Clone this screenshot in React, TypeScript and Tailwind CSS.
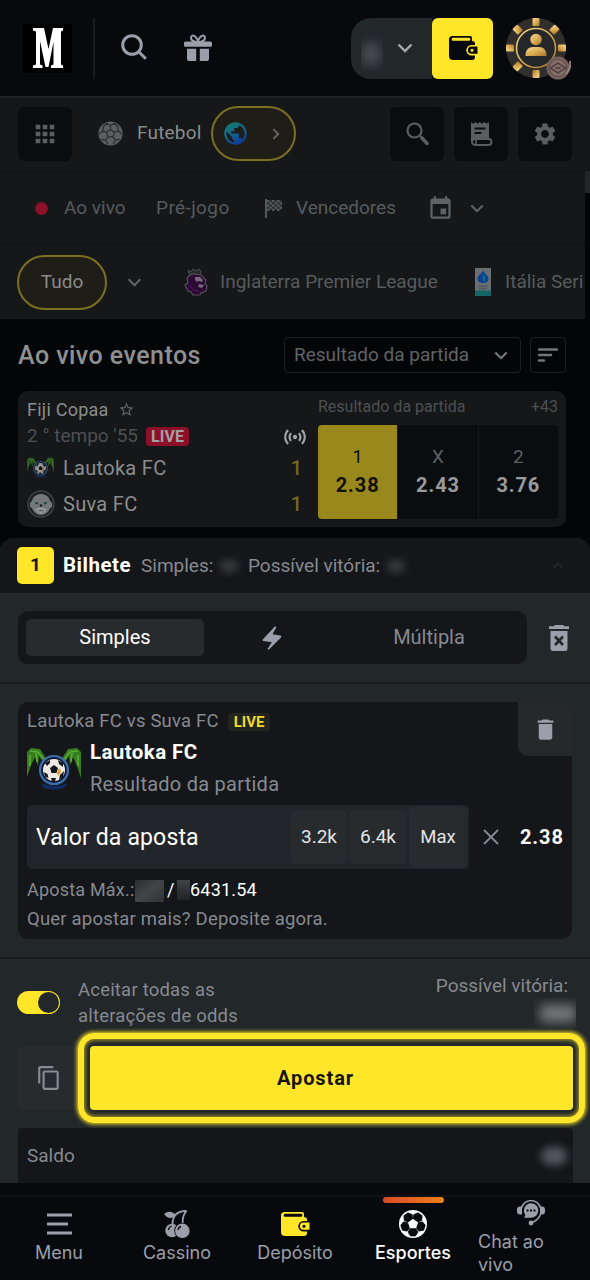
import type { ReactNode } from 'react'
import { MdApps, MdContentCopy, MdDelete, MdEvent, MdPublic, MdSensors, MdSettings, MdStarBorder } from 'react-icons/md'

type IconProps = { className?: string }

function Chevron({ className = '' }: IconProps) {
  return (
    <svg viewBox="0 0 16 10" fill="none" stroke="currentColor" strokeWidth="2.4" className={className}>
      <path d="M1.5 1.5 8 8l6.5-6.5" />
    </svg>
  )
}

function WalletIcon({ className = '', clasp }: IconProps & { clasp: string }) {
  return (
    <svg viewBox="0 0 30 26" className={className}>
      <path d="M4.5 1H22a2 2 0 0 1 2 2v3a3 3 0 0 1 3 3v13a3 3 0 0 1-3 3H5a4 4 0 0 1-4-4V4.5A3.5 3.5 0 0 1 4.5 1Z" fill="currentColor" />
      <rect x="3.8" y="2.8" width="18.5" height="3" rx="1.2" fill={clasp} />
      <path d="M30 10h-6.5a5.2 5.2 0 0 0 0 10.4H30Z" fill={clasp} />
      <path d="M29.5 11.6h-6a3.6 3.6 0 0 0 0 7.2h6Z" fill="currentColor" />
      <circle cx="24" cy="15.2" r="1.5" fill={clasp} />
    </svg>
  )
}

function GiftIcon() {
  return (
    <svg viewBox="0 0 28 28" className="size-7 text-[#9a9faa]" fill="currentColor">
      <path d="M14 8C9 8 6.8 5.8 7 3.5 7.3.8 11.5.2 14 7 16.5.2 20.7.8 21 3.5 21.2 5.8 19 8 14 8Z" fill="none" stroke="currentColor" strokeWidth="2" />
      <path d="M1.5 7.5h25A1.5 1.5 0 0 1 28 9v2.5a1.2 1.2 0 0 1-1.2 1.2H1.2A1.2 1.2 0 0 1 0 11.5V9a1.5 1.5 0 0 1 1.500-1.500Z" />
      <path d="M3 14.800h9.200V27H5a2 2 0 0 1-2-2ZM15.800 14.800H25V25a2 2 0 0 1-2 2h-7.200Z" />
    </svg>
  )
}

function ChipAvatar() {
  const marks = [0, 45, 90, 135, 180, 225, 270, 315]
  return (
    <svg viewBox="0 0 66 66" className="size-[66px] shrink-0">
      <defs>
        <linearGradient id="gold" x1="0" y1="0" x2="1" y2="1">
          <stop offset="0" stopColor="#f7d98c" />
          <stop offset="0.5" stopColor="#dcae58" />
          <stop offset="1" stopColor="#a97424" />
        </linearGradient>
      </defs>
      <circle cx="31" cy="31" r="30" fill="#302f2d" />
      {marks.map((deg) => (
        <rect key={deg} x="27.5" y="1" width="7" height="8" rx="1" fill="url(#gold)" transform={`rotate(${deg} 31 31)`} />
      ))}
      <circle cx="31" cy="31" r="19.5" fill="#25262a" stroke="url(#gold)" strokeWidth="1.6" />
      <circle cx="31" cy="22.5" r="5.8" fill="url(#gold)" />
      <path d="M20.5 39c0-6 3-9 7.5-9h6c4.5 0 7.5 3 7.5 9Z" fill="url(#gold)" />
      <circle cx="53" cy="51" r="11.5" fill="#76605c" />
      <circle cx="53" cy="51" r="8.5" fill="#86706b" stroke="#5f4b49" strokeWidth="1" />
      <path d="m45.5 51 7.5-5 7.5 5-7.5 5ZM50.5 51h5" fill="none" stroke="#574442" strokeWidth="1.8" />
      <path d="M65 44c1 5-1 10-4 13" stroke="#9b827c" strokeWidth="2" fill="none" />
    </svg>
  )
}

function Ball({ className = '', dark, light }: IconProps & { dark: string; light: string }) {
  return (
    <svg viewBox="0 0 28 28" className={className}>
      <circle cx="14" cy="14" r="13.5" fill={light} />
      <path
        d="m14 9.5 4.4 3.2-1.7 5.1h-5.4l-1.7-5.1ZM14 9.5V5m4.4 7.7 4.2-1.5m-5.9 6.6 2.7 3.7m-8.1-3.7-2.7 3.7m1-8.8-4.2-1.5M14 5 9.5 2.5M14 5l4.5-2.5M22.6 11.2l-.5-5m.5 5 4 3.5M19.4 21.5l5-1m-5 1L17 26M8.6 21.5l-5-1m5 1L11 26M5.4 11.2l.5-5m-.5 5-4 3.5M9.5 2.5 5.9 6.2M18.5 2.5l3.6 3.7"
        stroke={dark}
        strokeWidth="1.4"
        fill="none"
      />
    </svg>
  )
}

function NavBall() {
  return (
    <svg viewBox="0 0 28 28" className="size-7">
      <circle cx="14" cy="14" r="14" fill="#fff" />
      {[0, 72, 144, 216, 288].map((deg) => (
        <path key={deg} d="M11.2 18.8h5.6l2 3.3-2.3 3.8h-5l-2.3-3.8Z" fill="#08090d" stroke="#08090d" strokeLinejoin="round" transform={`rotate(${deg} 14 14)`} />
      ))}
    </svg>
  )
}

function Globe() {
  return (
    <>
      <svg className="size-0">
        <linearGradient id="sea" x1="0" y1="0" x2="0.5" y2="1">
          <stop offset="0" stopColor="#167d5d" />
          <stop offset="0.5" stopColor="#13698c" />
          <stop offset="1" stopColor="#103e9c" />
        </linearGradient>
      </svg>
      <MdPublic className="-m-[2px] size-[27px]" fill="url(#sea)" />
    </>
  )
}

function ReceiptIcon() {
  return (
    <svg viewBox="0 0 23 24" className="h-6 w-[23px]">
      <path d="m1 0 2.200 1.800L5.400 0l2.200 1.800L9.800 0 12 1.800 14.200 0l2.200 1.800L19 0v17H6.500A4 4 0 0 0 3 22.500L1 20Z" fill="#5a5e60" />
      <path d="M4.500 6.500h11M4.500 11h7" stroke="#090d0f" strokeWidth="2" />
      <rect x="2" y="17" width="19.5" height="6" rx="3" fill="#090d0f" stroke="#5a5e60" strokeWidth="1.8" />
      <path d="M6 17v6" stroke="#5a5e60" strokeWidth="1.6" />
    </svg>
  )
}

function CheckeredFlag() {
  const cells = [0, 1, 2, 3, 4, 5].flatMap((x) => [0, 1, 2, 3, 4].map((y) => [x, y])).filter(([x, y]) => (x + y) % 2 === 0)
  return (
    <svg viewBox="0 0 18 19" className="h-[19px] w-[18px]" fill="#54585a">
      <path d="M0 0h2v19H0Z" />
      <path d="M2 1h15v10H2Z" opacity="0.35" />
      {cells.map(([x, y]) => (
        <rect key={`${x}-${y}`} x={2 + x * 2.5} y={1 + y * 2.2} width="2.5" height="2.2" />
      ))}
    </svg>
  )
}

function PremierLogo() {
  return (
    <svg viewBox="0 0 24 28" className="h-7 w-6">
      <path d="m5 8 3-2h8l3 3 3 3-1 4 2 2-1 5-5 2-1 2h-7l-2-3-3-1-3-6 3-2-1-5Z" fill="#2c0835" stroke="#57515b" strokeWidth="1.2" />
      <path d="m5 6-1-4 3 2 2-3 3 2 3-2 2 2-1 4-5-1Z" fill="#2a2a2e" stroke="#4f4c54" strokeWidth="1" />
      <path d="M11 9h5l3 3-1 2-3-1-2 1-2-2ZM15 16l5 1-2 3-4-1Z" fill="#746a79" />
      <path d="m6 18 4 4 5 1" stroke="#431950" strokeWidth="1.5" fill="none" />
    </svg>
  )
}

function SerieALogo() {
  return (
    <svg viewBox="0 0 16 28" className="h-7 w-4">
      <path d="M0 0h16v28H0Z" fill="#696e72" />
      <path d="M8 2.5c1 3 5.5 5 5.5 8.500 0 3-2.500 4-5.500 4s-5.500-1-5.500-4C2.500 7.500 7 5.500 8 2.500Z" fill="#0b448d" />
      <path d="M8 5c1 3 3 4 2.500 7L8 14Z" fill="#12689e" />
      <path d="M3 18h10M4 20.500h8" stroke="#505866" strokeWidth="1.4" />
      <path d="M0 22.500h16V28H0Z" fill="#156466" />
    </svg>
  )
}

function LautokaLogo({ className = '' }: IconProps) {
  return (
    <svg viewBox="0 0 54 44" className={className}>
      <path d="M0 30V5L4 1l9 1 7 11-4 2-4-6-1 10-3-9-4 8Z" fill="#377d20" />
      <path d="M54 31V5l-4-4-9 1-7 11 4 2 4-6 1 10 3-9 4 9Z" fill="#377d20" />
      <path d="m3 4 8 1 7 9M51 4l-8 1-7 9M3 8v11M9 6l1 9M51 8v11M45 6l-1 9" stroke="#58ad34" strokeWidth="1.6" fill="none" />
      <path d="M13 36q14 6 28 0l-4 5q-10 3-20 0Z" fill="#102a62" />
      <circle cx="27" cy="23" r="14" fill="#101c36" stroke="#3e70ae" strokeWidth="2.2" />
      <circle cx="27" cy="23" r="11" fill="#eeebe4" />
      <path d="m27 18 4 3-1.5 5h-5L23 21ZM18 16l5-3v3l-3 3ZM31 13l5 3v4l-4-3ZM16.5 25l4 2 1 4-3-1ZM33 28l4-4-1 6-4 3ZM24 31h5l-1 3h-3Z" fill="#12151b" />
      <path d="m31 23 2-2 1 4-3 4-1-3Z" fill="#d8a130" />
    </svg>
  )
}

function SuvaLogo() {
  return (
    <svg viewBox="0 0 28 28" className="size-[28px]">
      <circle cx="14" cy="14" r="13" fill="#1d2020" stroke="#3d4142" strokeWidth="1.5" />
      <path d="M5 11C6 6 10 4 14 4s8 2 9 7c3 1 3 7 0 7-1 4-5 7-9 7s-8-3-9-7c-3 0-3-6 0-7Z" fill="#747878" />
      <path d="m8 12 3.500.500-1 2-2-.500ZM20 12l-3.500.500 1 2 2-.500Z" fill="#17493b" />
      <path d="m8 19 6-2 6 2-2 3-4 2-4-2Z" fill="#929594" />
      <path d="M11 20.200h6l-1 1h-4Z" fill="#4a4e4f" />
      <circle cx="14" cy="15.5" r="1.3" fill="#17191a" />
    </svg>
  )
}

function BoltIcon() {
  return (
    <svg viewBox="0 0 20 24" className="h-6 w-5" fill="#9a9faa">
      <path d="M13 .3 1 13.200q-1.200 1.500.6 1.800l8.200 1.200L5.500 23l1.300.7L19 11.500q1.200-1.600-.8-2L10.500 8.200 14.500 1Z" />
    </svg>
  )
}

function ClearSlipIcon() {
  return (
    <svg viewBox="0 0 20 26" className="h-[26px] w-5" fill="#9a9faa">
      <path d="M6 0h8l1.500 1.200H20V4H0V1.200h4.500ZM1.500 6h17v17.500a2.500 2.500 0 0 1-2.500 2.500H4a2.500 2.500 0 0 1-2.500-2.500Z" />
      <path d="m6 11.500 8 8.500m0-8.500-8 8.500" stroke="#22272a" strokeWidth="2.6" />
    </svg>
  )
}

function CherryIcon() {
  return (
    <svg viewBox="0 0 26 29" className="h-[29px] w-[26px]" fill="#9a9faa">
      <path d="M0 4C5 0 9 2 12 5 8 9 4 9 1 5Z" />
      <path d="M22.500.8C15 1 8.500 4 8.500 14M22.500.8C19 5 18 9 19 14" fill="none" stroke="#9a9faa" strokeWidth="1.8" />
      <circle cx="8" cy="20.5" r="6.7" />
      <circle cx="18.3" cy="20.8" r="8.1" fill="#08090d" />
      <circle cx="18.3" cy="20.8" r="7.3" />
      <path d="M4.500 20q.3-3 3-4M14 20q.5-3 3-3.500" fill="none" stroke="#08090d" strokeWidth="1.3" />
    </svg>
  )
}

function SupportIcon() {
  return (
    <svg viewBox="0 0 28 26" className="h-[26px] w-7" fill="#9a9faa">
      <path d="M4.500 8A9.800 9.800 0 0 1 23.500 8" fill="none" stroke="#9a9faa" strokeWidth="1.5" />
      <path d="M5 6.500v8H3a3 3 0 0 1-3-3v-2a3 3 0 0 1 3-3ZM23 6.500v8h2a3 3 0 0 0 3-3v-2a3 3 0 0 0-3-3Z" />
      <path d="M14 3.200a7.300 7.300 0 1 1 0 14.600H7l1.500-2.800A7.300 7.300 0 0 1 14 3.200Z" />
      <path d="M23.500 14c-1 4-4 6.500-8 8.500" fill="none" stroke="#9a9faa" strokeWidth="1.5" />
      <circle cx="14" cy="23" r="2.4" />
      <path d="M9.500 10.500h2m1.500 0h2m1.500 0h2" stroke="#08090d" strokeWidth="1.8" />
    </svg>
  )
}

function ToolButton({ children }: { children: ReactNode }) {
  return (
    <button type="button" className="flex size-[54px] shrink-0 items-center justify-center rounded-md bg-[#090d0f] text-[#5a5e60]">
      {children}
    </button>
  )
}

// Hidden balance amounts
function Redacted({ className = '' }: IconProps) {
  return <span className={`block shrink-0 rounded-full bg-[#54585c] blur-[4px] ${className}`} />
}

function Header() {
  return (
    <header className="flex h-24 shrink-0 items-center bg-[#08090d] pl-[23px]">
      <div className="flex size-[49px] items-center justify-center bg-black">
        <svg viewBox="0 0 30 40" className="h-10 w-[30px]" fill="#fff">
          <path d="M0 0h11l4.500 21L20 0h10v2.500l-2 1v33l2 1V40H18v-2.500l2.500-1V14l-5 25h-3L7 13v23.500l2.500 1V40H0v-2.500l3-1v-33l-3-1Z" />
        </svg>
      </div>
      <div className="ml-[21px] h-[61px] w-[2px] bg-[#191b20]" />
      <svg viewBox="0 0 26 26" className="mb-[3px] ml-[26px] size-[26px]" fill="none" stroke="#9a9faa" strokeWidth="3">
        <circle cx="11" cy="11" r="9.3" />
        <path d="m17.500 17.500 7.300 7.300" />
      </svg>
      <div className="ml-[37px]">
        <GiftIcon />
      </div>
      <div className="ml-[139px] flex h-[61px] w-[81px] items-center rounded-l-[20px] bg-[#22272a]">
        <div className="ml-[10px] h-[43px] w-[22px] overflow-hidden">
          <div className="mt-[15px] h-6 w-5 rounded-full bg-[#4a4e51] blur-[6px]" />
        </div>
        <Chevron className="ml-[14px] h-[10px] w-4 text-[#a5a8ac]" />
      </div>
      <button type="button" className="flex size-[61px] items-center justify-center rounded-md bg-[#ffe628] text-[#08090d]">
        <WalletIcon className="h-[26px] w-[30px]" clasp="#ffe628" />
      </button>
      <div className="ml-[12px] pt-[3px]">
        <ChipAvatar />
      </div>
    </header>
  )
}

function SportsBar() {
  return (
    <div className="flex h-[75px] shrink-0 items-center border-t-2 border-[#222325] bg-[#151719] pb-[2px] pl-[18px] font-['Roboto',sans-serif]">
      <ToolButton>
        <MdApps className="size-7" />
      </ToolButton>
      <Ball className="ml-[26px] size-[25px]" light="#5a6062" dark="#292d2f" />
      <span className="ml-[14px] w-[74px] text-[19px] tracking-[0.2px] text-[#8a8c8c]">Futebol</span>
      <div className="flex h-[55px] w-[85px] items-center rounded-full border-2 border-[#7a7020] bg-[#1e1d18] pl-[11px]">
        <Globe />
        <Chevron className="ml-[23px] h-[8px] w-[12px] -rotate-90 text-[#656666]" />
      </div>
      <div className="ml-[94px] flex gap-[10px]">
        <ToolButton>
          <svg viewBox="0 0 23 24" className="h-6 w-[23px]" fill="none" stroke="currentColor">
            <circle cx="8.5" cy="8.5" r="7" strokeWidth="2.2" />
            <path d="m14 14 3 3" strokeWidth="2" />
            <path d="m16 16 5 5.500" strokeWidth="3.5" strokeLinecap="round" />
          </svg>
        </ToolButton>
        <ToolButton>
          <ReceiptIcon />
        </ToolButton>
        <ToolButton>
          <MdSettings className="size-[26px]" />
        </ToolButton>
      </div>
    </div>
  )
}

function Filters() {
  return (
    <div className="flex shrink-0 bg-[#040507]">
      <div className="w-[585px] overflow-hidden bg-[#151719] font-['Roboto',sans-serif] text-[19px] text-[#575b5d]">
        <div className="flex h-[74px] items-center border-y border-[#0e1012] pl-[35px] whitespace-nowrap">
          <span className="size-[13px] rounded-full bg-[#8d1029]" />
          <span className="ml-[16px] w-[92px]">Ao vivo</span>
          <span className="w-[109px] tracking-[0.4px]">Pré-jogo</span>
          <CheckeredFlag />
          <span className="ml-[13px] w-[131px]">Vencedores</span>
          <MdEvent className="size-[27px] text-[#606365]" />
          <Chevron className="ml-[16px] h-[9px] w-[14px] text-[#606365]" />
        </div>
        <div className="flex h-[74px] items-center pl-[17px] whitespace-nowrap">
          <div className="flex h-[55px] w-[90px] shrink-0 items-center justify-center rounded-full border-2 border-[#7a7020] bg-[#1e1d18] text-[#8a8b89]">
            Tudo
          </div>
          <Chevron className="ml-[20px] h-[9px] w-[15px] shrink-0 text-[#606365]" />
          <div className="ml-[42px] shrink-0">
            <PremierLogo />
          </div>
          <span className="ml-[12px] w-[255px] shrink-0">Inglaterra Premier League</span>
          <div className="shrink-0">
            <SerieALogo />
          </div>
          <span className="ml-[14px]">Itália Seri</span>
        </div>
      </div>
      <div className="h-[22px] w-[5px] bg-[#242527]" />
    </div>
  )
}

function TeamRow({ logo, name, score }: { logo: ReactNode; name: string; score: number }) {
  return (
    <div className="flex h-[36px] items-center">
      <div className="w-[36px]">{logo}</div>
      <span className="flex-1 text-[20px] tracking-[0.3px] text-[#8b8d8d]">{name}</span>
      <span className="mr-[7px] text-[20px] font-medium text-[#71691d]">{score}</span>
    </div>
  )
}

function Odd({ label, value, active = false }: { label: string; value: string; active?: boolean }) {
  return (
    <div className={`flex flex-1 flex-col items-center justify-center gap-[3px] border-l border-[#16191b] pb-[2px] first:border-l-0 first:rounded-l last:rounded-r ${active ? 'bg-[#99891c] text-[#111108]' : 'bg-[#090d0f] text-[#999b9d]'}`}>
      <span className={`text-[19px] leading-[24px] ${active ? '' : 'text-[#5d6163]'}`}>{label}</span>
      <span className="text-[20px] leading-[26px] font-bold tracking-[0.9px]">{value}</span>
    </div>
  )
}

function LiveEvents() {
  return (
    <section className="h-[219px] shrink-0 bg-[#040507] pl-[18px] font-['Roboto',sans-serif]">
      <div className="flex h-[72px] items-center whitespace-nowrap">
        <h2 className="w-[266px] pt-[1px] text-[25px] font-medium tracking-[0.45px] text-[#8f9191]">Ao vivo eventos</h2>
        <div className="flex h-9 w-[237px] items-center justify-between rounded border border-[#1d1f22] pr-[12px] pl-[9px] text-[19px] text-[#606366]">
          Resultado da partida
          <Chevron className="h-[9px] w-[14px] text-[#77797b]" />
        </div>
        <button type="button" className="ml-[9px] flex size-9 items-center justify-center rounded border border-[#1d1f22]">
          <svg viewBox="0 0 20 14" className="h-[14px] w-5" stroke="#737577" strokeWidth="2.4" strokeLinecap="round">
            <path d="M1 1.500h18M1 7h12M1 12.500h5" />
          </svg>
        </button>
      </div>
      <div className="flex h-[136px] w-[548px] rounded-[10px] bg-[#151719] pl-[9px]">
        <div className="w-[282px] pt-[5px]">
          <div className="flex h-[27px] items-center text-[18px] tracking-[0.25px] text-[#8b8d8d]">
            <span className="w-[91px]">Fiji Copaa</span>
            <MdStarBorder className="size-[17px] text-[#606365]" />
          </div>
          <div className="flex h-[27px] items-center text-[19px] text-[#4d5052]">
            <span className="w-[119px]">2 ° tempo '55</span>
            <span className="flex h-[19px] w-[43px] items-center justify-center rounded bg-[#8d1029] pt-[1px] text-[16px] font-bold text-[#a5a0a2]">LIVE</span>
            <MdSensors className="mr-[1px] ml-auto size-[26px] text-[#a0a2a2]" />
          </div>
          <TeamRow logo={<LautokaLogo className="h-[22px] w-[27px] opacity-60" />} name="Lautoka FC" score={1} />
          <TeamRow logo={<SuvaLogo />} name="Suva FC" score={1} />
        </div>
        <div className="ml-[9px] w-[240px] pt-[2px]">
          <div className="flex h-[28px] items-center justify-between text-[16px] text-[#4d5052]">
            <span>Resultado da partida</span>
            <span>+43</span>
          </div>
          <div className="mt-[4px] flex h-[94px]">
            <Odd label="1" value="2.38" active />
            <Odd label="X" value="2.43" />
            <Odd label="2" value="3.76" />
          </div>
        </div>
      </div>
    </section>
  )
}

function BetCard() {
  return (
    <div className="ml-[18px] h-[237px] w-[554px] rounded-[10px] bg-[#141619] pl-[9px]">
      <div className="flex h-[103px]">
        <div className="flex-1">
          <div className="flex h-[39px] items-center pt-[1px] text-[18.5px] tracking-[0.2px] text-[#878a91]">
            <span className="w-[201px]">Lautoka FC vs Suva FC</span>
            <span className="flex h-[18px] w-[42px] items-center justify-center rounded bg-[#22241f] text-[15px] font-bold tracking-normal text-[#f2d72b]">LIVE</span>
          </div>
          <div className="flex">
            <LautokaLogo className="mt-[6px] h-[44px] w-[54px]" />
            <div className="-mt-[5px] ml-[9px] flex flex-col">
              <span className="text-[20.5px] leading-[32px] font-bold tracking-[0.4px] text-white">Lautoka FC</span>
              <span className="text-[20px] leading-[32px] tracking-[0.25px] text-[#878a91]">Resultado da partida</span>
            </div>
          </div>
        </div>
        <button type="button" className="flex size-[54px] items-center justify-center rounded-tr-[10px] rounded-bl-[10px] bg-[#26292c] text-[#9a9faa]">
          <MdDelete className="h-[29px] w-[27px]" />
        </button>
      </div>
      <div className="flex items-center">
        <div className="flex h-[64px] w-[442px] items-center rounded-[5px] bg-[#22262a] pl-[9px] text-white">
          <span className="w-[255px] pt-[2px] text-[23px] tracking-[0.15px]">Valor da aposta</span>
          <div className="flex items-center gap-[3px] text-[19px] text-[#e3e4e5]">
            <span className="flex h-[54px] w-[56px] items-center justify-center rounded-[5px] bg-[#272b2e]">3.2k</span>
            <span className="flex h-[54px] w-[56px] items-center justify-center rounded-[5px] bg-[#272b2e]">6.4k</span>
            <span className="flex h-[60px] w-[58px] items-center justify-center rounded-[5px] bg-[#272b2e] pt-[1px] text-[18.5px]">Max</span>
          </div>
        </div>
        <svg viewBox="0 0 16 16" className="ml-[14px] size-4" stroke="#878a91" strokeWidth="1.8">
          <path d="m1 1 14 14M15 1 1 15" />
        </svg>
        <span className="ml-[21px] text-[20px] font-bold tracking-[0.9px] text-white">2.38</span>
      </div>
      <div className="flex h-[41px] items-center text-[18px] tracking-[0.2px] text-[#878a91]">
        <span className="w-[108px]">Aposta Máx.:</span>
        <span className="mt-[2px] h-[22px] w-[29px] bg-linear-to-br from-[#2b2d30] via-[#434548] to-[#303235]" />
        <span className="ml-[3px] w-[10px] text-white">/</span>
        <span className="h-[20px] w-[13px] bg-linear-to-b from-[#404245] to-[#212327]" />
        <span className="text-[18px] text-white">6431.54</span>
      </div>
      <div className="text-[18.5px] leading-[18px] tracking-[0.2px] text-[#878a91]">Quer apostar mais? Deposite agora.</div>
    </div>
  )
}

function BetSlip() {
  return (
    <div className="h-[645px] shrink-0 bg-[#040507] font-['Roboto',sans-serif]">
      <div className="h-[645px] rounded-t-[14px] bg-[#22272a]">
        <div className="flex h-[55px] items-center rounded-t-[14px] bg-[#141619] pl-[17px] text-[19px] whitespace-nowrap text-[#878a91]">
          <span className="flex h-[37px] w-[37px] items-center justify-center rounded-[5px] bg-[#ffe628] font-bold text-[#141619]">1</span>
          <span className="ml-[9px] w-[78px] text-[20.5px] font-bold tracking-[0.5px] text-white">Bilhete</span>
          <span className="w-[79px] pt-[1px]">Simples:</span>
          <Redacted className="h-[12px] w-[18px] opacity-60" />
          <span className="ml-[10px] w-[139px] pt-[1px]">Possível vitória:</span>
          <Redacted className="h-[12px] w-[18px] opacity-60" />
          <Chevron className="ml-[147px] h-[7px] w-[12px] rotate-180 text-[#24272b]" />
        </div>
        <div className="flex h-[91px] items-center border-b-2 border-[#171b1e] pl-[18px]">
          <div className="flex h-[53px] w-[509px] items-center rounded-[10px] bg-[#141619] pl-[8px] text-[20px] text-[#878a91]">
            <span className="flex h-[37px] w-[178px] items-center justify-center rounded-[5px] bg-[#272b2e] pb-[1px] text-white">Simples</span>
            <span className="flex w-[136px] justify-center">
              <BoltIcon />
            </span>
            <span className="flex w-[178px] justify-center pb-[1px]">Múltipla</span>
          </div>
          <div className="ml-[22px]">
            <ClearSlipIcon />
          </div>
        </div>
        <div className="flex h-[275px] items-center border-b-2 border-[#171b1e]">
          <BetCard />
        </div>
        <div className="flex h-[76px] pl-[17px] text-[#878a91]">
          <div className="mt-[32px] flex h-[23px] w-[43px] items-center justify-end rounded-full bg-[#ffe628] pr-[1px]">
            <span className="size-[21px] rounded-full bg-[#24272a]" />
          </div>
          <div className="mt-[18px] ml-[18px] w-[200px] text-[18.5px] leading-[26px] tracking-[0.2px]">
            Aceitar todas as
            <br />
            alterações de odds
          </div>
          <div className="mt-[15px] ml-auto flex w-[160px] flex-col items-end pr-[14px]">
            <span className="mr-[8px] text-[19px] leading-[24px] whitespace-nowrap">Possível vitória:</span>
            <div className="flex h-[30px] w-[42px] items-center justify-end overflow-hidden">
              <span className="h-[17px] w-[36px] bg-[#777a7c] blur-[6px]" />
            </div>
          </div>
        </div>
        <div className="flex h-[93px] items-start pl-[18px]">
          <button type="button" className="mt-[11px] flex h-[64px] w-[62px] items-center justify-center rounded-l-md bg-[#272b2e] text-[#878a91]">
            <MdContentCopy className="h-[26px] w-[26px]" />
          </button>
          {/* Highlighted submit button */}
          <div className="-mt-[2px] -ml-[2px] rounded-[16px] border-[6px] border-[#ffe628] px-[6px] py-[7px] shadow-[0_0_4px_1px_#ffe628,inset_0_0_4px_1px_#b4a425]">
            <button type="button" className="block h-[64px] w-[483px] rounded-[4px] bg-[#ffe628] pr-[32px] text-[20px] font-bold tracking-[0.9px] text-[#14140e]">
              Apostar
            </button>
          </div>
        </div>
        <div className="ml-[18px] flex h-[55px] w-[555px] items-center justify-between rounded-t bg-[#141619] pt-[1px] pr-[6px] pl-[9px] text-[19px] text-[#878a91]">
          Saldo
          <Redacted className="h-[18px] w-[26px]" />
        </div>
      </div>
    </div>
  )
}

function NavItem({ icon, label, active = false }: { icon: ReactNode; label: string; active?: boolean }) {
  return (
    <div className={`flex w-[118px] shrink-0 flex-col items-center ${active ? 'font-medium text-white' : 'text-[#9a9faa]'}`}>
      <div className={`h-[6px] w-[61px] rounded-full ${active ? 'bg-linear-to-r from-[#d94a28] to-[#f07c18]' : ''}`} />
      <div className="mt-[6px] flex h-[30px] items-center">{icon}</div>
      <span className="mt-[2px] text-[18px] leading-[24px]">{label}</span>
    </div>
  )
}

function BottomNav() {
  return (
    <nav className="h-[97px] shrink-0 bg-[#08090d] pt-[12px] font-['Inter',sans-serif]">
      <div className="flex h-[85px] border-t-2 border-[#101216]">
        <NavItem
          icon={
            <svg viewBox="0 0 25 22" className="h-[22px] w-[25px]" stroke="#9a9faa" strokeWidth="3">
              <path d="M0 2h25M0 11h21M0 20h25" />
            </svg>
          }
          label="Menu"
        />
        <NavItem icon={<CherryIcon />} label="Cassino" />
        <NavItem icon={<WalletIcon className="h-[26px] w-[30px] text-[#ffe628]" clasp="#08090d" />} label="Depósito" />
        <NavItem icon={<NavBall />} label="Esportes" active />
        <div className="flex w-[118px] shrink-0 flex-col pt-[3px] pl-[6px] text-[18px] leading-[23px] text-[#9a9faa]">
          <div className="ml-[39px]">
            <SupportIcon />
          </div>
          <span className="mt-[4px] w-[80px]">Chat ao vivo</span>
        </div>
      </div>
    </nav>
  )
}

export default function App() {
  return (
    <div className="flex h-[1280px] w-[590px] flex-col overflow-hidden bg-[#040507]">
      <Header />
      <SportsBar />
      <Filters />
      <LiveEvents />
      <BetSlip />
      <BottomNav />
    </div>
  )
}
